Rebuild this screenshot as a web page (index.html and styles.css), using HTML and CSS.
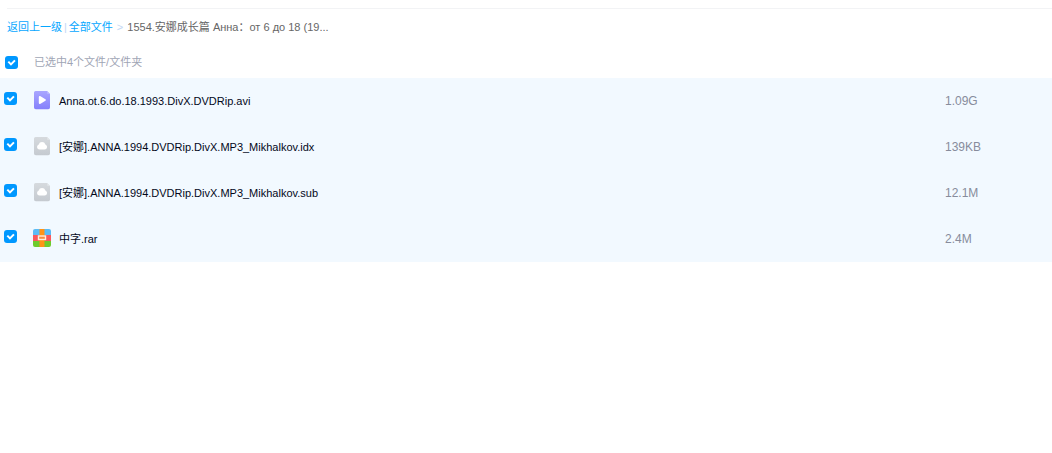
FILE: index.html
```html
<!DOCTYPE html>
<html lang="zh-CN">
<head>
    <meta charset="UTF-8">
    <meta name="viewport" content="width=device-width, initial-scale=1.0">
    <title>全部文件</title>
    <link rel="stylesheet" href="styles.css">
</head>
<body>
    <svg class="icon-defs" aria-hidden="true">
        <defs>
            <linearGradient id="videoFill" x1="0" y1="0" x2="0" y2="1">
                <stop offset="0" stop-color="#a9a6ff"/>
                <stop offset="1" stop-color="#8580fb"/>
            </linearGradient>
            <linearGradient id="fileFill" x1="0" y1="0" x2="0" y2="1">
                <stop offset="0" stop-color="#d6dade"/>
                <stop offset="1" stop-color="#c5cad0"/>
            </linearGradient>
            <clipPath id="rarShape">
                <rect x="1" y="1" width="18" height="18" rx="2"/>
            </clipPath>
        </defs>
        <symbol id="icon-video" viewBox="0 0 20 20">
            <path fill="url(#videoFill)" d="M4 1h11l3 3v13.500a1.800 1.800 0 0 1-1.800 1.800H3.800A1.800 1.800 0 0 1 2 17.500V2.800A1.800 1.800 0 0 1 4 1z"/>
            <path fill="#b9b6ff" d="M15 1l3 3h-2a1 1 0 0 1-1-1z"/>
            <path fill="#fff" d="M6.800 6.900c0-.8.700-1.100 1.300-.8l5.300 3.200c.6.400.6 1 0 1.400l-5.300 3.200c-.6.300-1.300 0-1.300-.8z"/>
        </symbol>
        <symbol id="icon-file" viewBox="0 0 20 20">
            <path fill="url(#fileFill)" d="M4 1h11l3 3v13.500a1.800 1.800 0 0 1-1.800 1.800H3.800A1.800 1.800 0 0 1 2 17.500V2.800A1.800 1.800 0 0 1 4 1z"/>
            <path fill="#dfe3e6" d="M15 1l3 3h-2a1 1 0 0 1-1-1z"/>
            <path fill="#fff" d="M7.500 13.600a2.700 2.700 0 0 1-.8-5.200 3.500 3.500 0 0 1 6.700 0 2.700 2.700 0 0 1-.8 5.200z"/>
        </symbol>
        <symbol id="icon-rar" viewBox="0 0 20 20">
            <g clip-path="url(#rarShape)">
                <path fill="#5bbcf5" d="M1 1h18v6H1z"/>
                <path fill="#f8595c" d="M1 7h18v6H1z"/>
                <path fill="#6ecb2d" d="M1 13h18v6H1z"/>
                <path fill="#ff9417" d="M7.500 1h5v18h-5z"/>
            </g>
            <rect x="6.500" y="8" width="7" height="3.500" fill="#f98b3c" stroke="#ffeedd" stroke-width="1.400"/>
        </symbol>
    </svg>

    <main class="file-list">
        <nav class="breadcrumb">
            <a href="#back">返回上一级</a>
            <span class="divider">|</span>
            <a href="#all">全部文件</a>
            <span class="arrow">&gt;</span>
            <span class="current">1554.安娜成长篇 Анна：от 6 до 18 (19...</span>
        </nav>

        <table class="files">
            <colgroup>
                <col class="col-check">
                <col>
                <col class="col-size">
            </colgroup>
            <thead>
                <tr>
                    <th><input type="checkbox" id="checkAll" checked></th>
                    <th colspan="2"><label for="checkAll">已选中4个文件/文件夹</label></th>
                </tr>
            </thead>
            <tbody>
                <tr>
                    <td><input type="checkbox" id="file1" checked></td>
                    <td><label class="name" for="file1"><svg class="icon"><use href="#icon-video"/></svg>Anna.ot.6.do.18.1993.DivX.DVDRip.avi</label></td>
                    <td class="size">1.09G</td>
                </tr>
                <tr>
                    <td><input type="checkbox" id="file2" checked></td>
                    <td><label class="name" for="file2"><svg class="icon"><use href="#icon-file"/></svg>[安娜].ANNA.1994.DVDRip.DivX.MP3_Mikhalkov.idx</label></td>
                    <td class="size">139KB</td>
                </tr>
                <tr>
                    <td><input type="checkbox" id="file3" checked></td>
                    <td><label class="name" for="file3"><svg class="icon"><use href="#icon-file"/></svg>[安娜].ANNA.1994.DVDRip.DivX.MP3_Mikhalkov.sub</label></td>
                    <td class="size">12.1M</td>
                </tr>
                <tr>
                    <td><input type="checkbox" id="file4" checked></td>
                    <td><label class="name" for="file4"><svg class="icon"><use href="#icon-rar"/></svg>中字.rar</label></td>
                    <td class="size">2.4M</td>
                </tr>
            </tbody>
        </table>
    </main>
</body>
</html>
```
FILE: styles.css
```css
body {
    margin: 0;
    background-color: #fff;
    color: #03081a;
    font-family: "Liberation Sans", "Noto Sans CJK SC", sans-serif;
    font-size: 11px;
    line-height: 16px;
}
.icon-defs {
    position: absolute;
    width: 0;
    height: 0;
}
.file-list {
    padding-top: 8px;
}
.breadcrumb {
    display: flex;
    margin-left: 7px;
    padding: 10px 0;
    border-top: 1px solid #f2f3f5;
    white-space: nowrap;
}
.breadcrumb a {
    color: #06a7ff;
    text-decoration: none;
}
.breadcrumb .divider {
    margin: 0 2px;
    color: #c4d8f4;
}
.breadcrumb .arrow {
    margin: 0 4px;
    color: #c4d8f4;
}
.breadcrumb .current {
    color: #666;
}
.files {
    width: 100%;
    border-collapse: collapse;
    table-layout: fixed;
}
.col-check {
    width: 30px;
}
.col-size {
    width: 107px;
}
.files th,
.files td {
    padding: 0;
    text-align: left;
    font-weight: normal;
}
.files th {
    height: 33px;
    color: #9fa5b5;
}
.files th label {
    padding-left: 4px;
}
.files td {
    height: 46px;
    background-color: #f2f9ff;
}
.files td.size {
    font-size: 12px;
    color: #878c9c;
}
.name {
    display: flex;
    align-items: center;
    gap: 7px;
    padding-left: 2px;
}
.icon {
    width: 20px;
    height: 20px;
    margin-bottom: 2px;
}
input[type="checkbox"] {
    appearance: none;
    display: block;
    width: 13px;
    height: 13px;
    margin: 0 0 5px 4px;
    border-radius: 3px;
    background-color: #0098ff;
}
th input[type="checkbox"] {
    margin: 2px 0 0 5px;
}
input[type="checkbox"]:checked::before {
    content: "";
    display: block;
    width: 13px;
    height: 13px;
    background-color: #fff;
    clip-path: polygon(20% 49%, 31% 38%, 46% 53%, 71% 28%, 82% 39%, 46% 75%);
}
```
